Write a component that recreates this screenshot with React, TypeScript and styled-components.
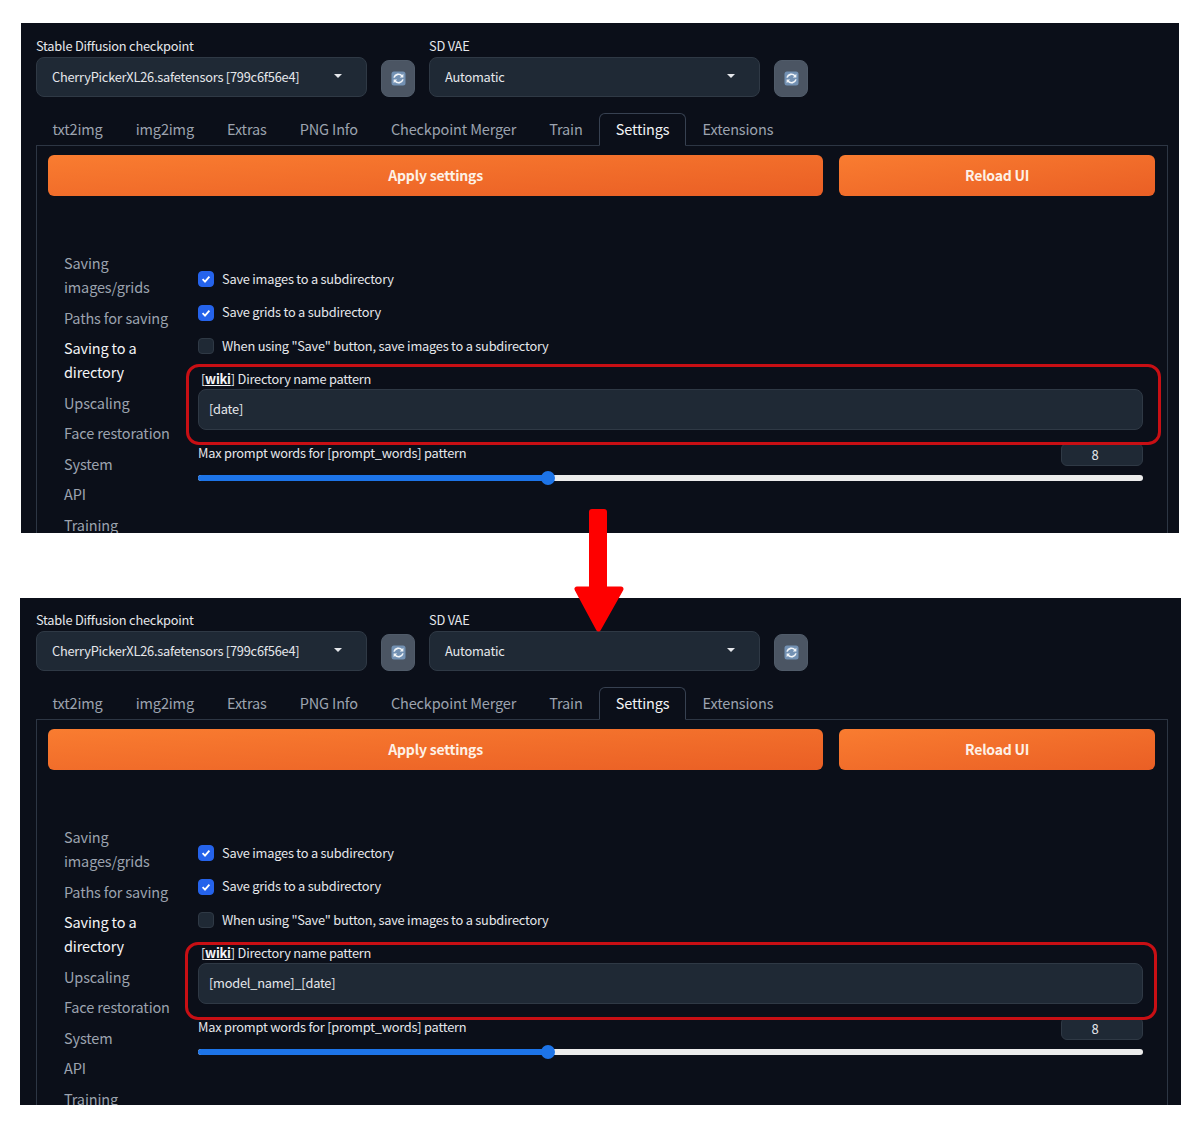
import styled, { createGlobalStyle } from 'styled-components';

const GlobalStyle = createGlobalStyle`
    html, body {
        margin: 0;
        padding: 0;
        background: #ffffff;
    }
    * {
        box-sizing: border-box;
    }
`;

const Page = styled.div`
    position: relative;
    height: 1128px;
    padding-top: 23px;
    display: flex;
    flex-flow: column;
    gap: 65px;
    font-family: "Noto Sans CJK JP", "Noto Sans", sans-serif;
    color: #e5e7eb;
    overflow: hidden;
`;

const Panel = styled.div<{ $left: number; $width: number; $height: number; $top: number }>`
    margin-left: ${(p) => p.$left}px;
    width: ${(p) => p.$width}px;
    height: ${(p) => p.$height}px;
    padding: ${(p) => p.$top}px 0 0 ${(p) => 36 - p.$left}px;
    background-color: #0b0f19;
    overflow: hidden;
    flex: none;
`;

const TopRow = styled.div`
    display: flex;
    align-items: flex-end;
    height: 51px;
`;

const ModelField = styled.div<{ $gap: number }>`
    display: flex;
    align-items: flex-end;
    margin-right: ${(p) => p.$gap}px;
`;

const ModelSelectWrap = styled.div`
    display: flex;
    flex-flow: column;
    margin-right: 14px;
`;

const SmallLabel = styled.label`
    font-size: 12.8px;
    letter-spacing: -0.22px;
    line-height: 16px;
    height: 19px;
    color: #e5e7eb;
    white-space: nowrap;
`;

const Select = styled.div<{ $width: number }>`
    display: flex;
    align-items: center;
    justify-content: space-between;
    width: ${(p) => p.$width}px;
    height: 40px;
    padding: 0 24px 2px 15px;
    background-color: #1f2935;
    border: 1px solid #2f3945;
    border-radius: 8px;
    font-size: 12.8px;
    letter-spacing: -0.22px;
    color: #e5e7eb;
    white-space: nowrap;
`;

const Caret = styled.span`
    width: 0;
    height: 0;
    border-left: 4px solid transparent;
    border-right: 4px solid transparent;
    border-top: 4px solid #e5e7eb;
`;

const RefreshButton = styled.div`
    display: flex;
    align-items: center;
    justify-content: center;
    width: 34px;
    height: 37px;
    background-color: #4b5563;
    border: 1px solid #505b69;
    border-radius: 8px;
`;

const Tabs = styled.div`
    display: flex;
    height: 33px;
    margin-top: 16px;
    position: relative;
    z-index: 1;
`;

const Tab = styled.div<{ $active?: boolean }>`
    display: flex;
    align-items: center;
    height: 33px;
    padding: 0 15.55px 2px;
    font-size: 14.5px;
    letter-spacing: -0.15px;
    white-space: nowrap;
    color: ${(p) => (p.$active ? '#f3f4f6' : '#9ca3af')};
    background-color: ${(p) => (p.$active ? '#0b0f19' : 'transparent')};
    border: 1px solid ${(p) => (p.$active ? '#374151' : 'transparent')};
    border-bottom: ${(p) => (p.$active ? '1px solid #0b0f19' : '1px solid transparent')};
    border-radius: 6px 6px 0 0;
`;

const TabBody = styled.div`
    width: 1132px;
    height: 600px;
    margin-top: -1px;
    padding: 9px 12px 0 11px;
    border: 1px solid #2d3644;
`;

const ActionRow = styled.div`
    display: flex;
    gap: 16px;
`;

const ActionButton = styled.div<{ $width: number }>`
    display: flex;
    align-items: center;
    justify-content: center;
    width: ${(p) => p.$width}px;
    height: 41px;
    padding-bottom: 2px;
    background: linear-gradient(to bottom right, #f97c30, #ea5f25);
    border-radius: 6px;
    font-size: 14px;
    letter-spacing: -0.2px;
    font-weight: 700;
    color: #fdf1e7;
`;

const SettingsLayout = styled.div`
    display: flex;
    margin-top: 55px;
`;

const Sidebar = styled.div`
    display: flex;
    flex-flow: column;
    gap: 6.55px;
    width: 150px;
    padding-left: 16px;
    flex: none;
`;

const SideItem = styled.div<{ $active?: boolean }>`
    font-size: 14.5px;
    letter-spacing: -0.15px;
    line-height: 24px;
    color: ${(p) => (p.$active ? '#f3f4f6' : '#9ca3af')};
    white-space: pre;
`;

const SettingsColumn = styled.div`
    display: flex;
    flex-flow: column;
    width: 945px;
    padding-top: 20px;
`;

const CheckRow = styled.div`
    display: flex;
    align-items: center;
    gap: 8px;
    height: 16px;
    margin-bottom: 17.7px;
    font-size: 12.8px;
    letter-spacing: -0.22px;
    white-space: nowrap;
`;

const CheckText = styled.span`
    margin-top: -2px;
`;

const CheckBox = styled.span<{ $checked?: boolean }>`
    display: flex;
    align-items: center;
    justify-content: center;
    width: 16px;
    height: 16px;
    border-radius: 4px;
    background-color: ${(p) => (p.$checked ? '#2563eb' : '#1f2935')};
    border: 1px solid ${(p) => (p.$checked ? '#2563eb' : '#2f3945')};
`;

const PatternField = styled.div`
    position: relative;
    margin-top: -1px;
`;

const PatternLabel = styled.div`
    padding: 1px 0 0 3px;
    font-size: 12.8px;
    letter-spacing: -0.22px;
    line-height: 14px;
    height: 18px;
    white-space: nowrap;
`;

const WikiLink = styled.span`
    font-weight: 700;
    text-decoration: underline;
    color: #f3f4f6;
`;

const PatternInput = styled.div`
    display: flex;
    align-items: center;
    height: 41px;
    padding: 0 0 2px 10px;
    background-color: #1f2935;
    border: 1px solid #2f3945;
    border-radius: 8px;
    font-size: 12.8px;
    letter-spacing: -0.22px;
`;

const RedFrame = styled.div<{ $top: number; $right: number; $left: number; $height: number }>`
    position: absolute;
    top: ${(p) => p.$top}px;
    left: ${(p) => p.$left}px;
    right: ${(p) => p.$right}px;
    height: ${(p) => p.$height}px;
    border: 3px solid #c80f14;
    border-radius: 13px;
    pointer-events: none;
`;

const SliderHead = styled.div`
    display: flex;
    justify-content: space-between;
    align-items: flex-start;
    height: 31px;
    margin-top: 14px;
    padding-top: 1px;
    font-size: 12.8px;
    letter-spacing: -0.22px;
    line-height: 16px;
    white-space: nowrap;
`;

const NumberBox = styled.div`
    display: flex;
    align-items: center;
    justify-content: center;
    width: 82px;
    height: 23px;
    margin-top: -2px;
    padding-right: 14px;
    background-color: #1f2935;
    border: 1px solid #2f3945;
    border-radius: 6px;
    font-size: 13px;
`;

const SliderTrack = styled.div`
    position: relative;
    height: 6px;
    border-radius: 3px;
    background-color: #ececec;
`;

const SliderFill = styled.div`
    height: 6px;
    border-radius: 3px;
    background-color: #1d74e8;
`;

const SliderThumb = styled.div`
    position: absolute;
    top: -4px;
    width: 14px;
    height: 14px;
    margin-left: -7px;
    border-radius: 50%;
    background-color: #1d74e8;
`;

const ArrowOverlay = styled.svg`
    position: absolute;
    left: 570px;
    top: 505px;
`;

const RefreshIcon = () => (
    <svg width="15" height="15" viewBox="0 0 15 15">
        <rect x="0.5" y="0.5" width="14" height="14" rx="2.5" fill="#7391b3" />
        <path d="M3 6.6 A4.6 4.6 0 0 1 11 5" fill="none" stroke="#f2f5f8" strokeWidth="1.6" />
        <path d="M12 8.4 A4.6 4.6 0 0 1 4 10" fill="none" stroke="#f2f5f8" strokeWidth="1.6" />
        <path d="M12.4 2.8 V6.6 H8.8 Z" fill="#f2f5f8" />
        <path d="M2.6 12.2 V8.4 H6.2 Z" fill="#f2f5f8" />
    </svg>
);

const CheckMark = () => (
    <svg width="10" height="10" viewBox="0 0 10 10">
        <path d="M1.6 5.2 L4 7.6 L8.4 2.6" fill="none" stroke="#ffffff" strokeWidth="1.8" />
    </svg>
);

const tabNames = ['txt2img', 'img2img', 'Extras', 'PNG Info', 'Checkpoint Merger', 'Train', 'Settings', 'Extensions'];

const sideItems = [
    'Saving\nimages/grids',
    'Paths for saving',
    'Saving to a\ndirectory',
    'Upscaling',
    'Face restoration',
    'System',
    'API',
    'Training',
];

const checks = [
    { text: 'Save images to a subdirectory', checked: true },
    { text: 'Save grids to a subdirectory', checked: true },
    { text: 'When using "Save" button, save images to a subdirectory', checked: false },
];

type SettingsPanelProps = {
    left: number;
    width: number;
    height: number;
    top: number;
    pattern: string;
    frame: { top: number; left: number; right: number; height: number };
};

const SettingsPanel = ({ left, width, height, top, pattern, frame }: SettingsPanelProps) => (
    <Panel $left={left} $width={width} $height={height} $top={top}>
        <TopRow>
            <ModelField $gap={14}>
                <ModelSelectWrap>
                    <SmallLabel>Stable Diffusion checkpoint</SmallLabel>
                    <Select $width={331}>
                        CherryPickerXL26.safetensors [799c6f56e4]
                        <Caret />
                    </Select>
                </ModelSelectWrap>
                <RefreshButton><RefreshIcon /></RefreshButton>
            </ModelField>
            <ModelField $gap={0}>
                <ModelSelectWrap>
                    <SmallLabel>SD VAE</SmallLabel>
                    <Select $width={331}>
                        Automatic
                        <Caret />
                    </Select>
                </ModelSelectWrap>
                <RefreshButton><RefreshIcon /></RefreshButton>
            </ModelField>
        </TopRow>
        <Tabs>
            {tabNames.map((name) => (
                <Tab key={name} $active={name === 'Settings'}>{name}</Tab>
            ))}
        </Tabs>
        <TabBody>
            <ActionRow>
                <ActionButton $width={776}>Apply settings</ActionButton>
                <ActionButton $width={316}>Reload UI</ActionButton>
            </ActionRow>
            <SettingsLayout>
                <Sidebar>
                    {sideItems.map((item) => (
                        <SideItem key={item} $active={item === 'Saving to a\ndirectory'}>{item}</SideItem>
                    ))}
                </Sidebar>
                <SettingsColumn>
                    {checks.map((check) => (
                        <CheckRow key={check.text}>
                            <CheckBox $checked={check.checked}>{check.checked && <CheckMark />}</CheckBox>
                            <CheckText>{check.text}</CheckText>
                        </CheckRow>
                    ))}
                    <PatternField>
                        <PatternLabel>[<WikiLink>wiki</WikiLink>] Directory name pattern</PatternLabel>
                        <PatternInput>{pattern}</PatternInput>
                        <RedFrame $top={frame.top} $left={frame.left} $right={frame.right} $height={frame.height} />
                    </PatternField>
                    <SliderHead>
                        Max prompt words for [prompt_words] pattern
                        <NumberBox>8</NumberBox>
                    </SliderHead>
                    <SliderTrack>
                        <SliderFill style={{ width: `${(350 / 945) * 100}%` }} />
                        <SliderThumb style={{ left: `${(350 / 945) * 100}%` }} />
                    </SliderTrack>
                </SettingsColumn>
            </SettingsLayout>
        </TabBody>
    </Panel>
);

const App = () => (
    <Page>
        <GlobalStyle />
        <SettingsPanel
            left={21}
            width={1158}
            height={510}
            top={23}
            pattern="[date]"
            frame={{ top: -7, left: -12, right: -18, height: 81 }}
        />
        <SettingsPanel
            left={20}
            width={1161}
            height={507}
            top={22}
            pattern="[model_name]_[date]"
            frame={{ top: -3, left: -13, right: -14, height: 78 }}
        />
        <ArrowOverlay width="60" height="130" viewBox="0 0 60 130">
            <rect x="19" y="4" width="18" height="90" rx="3" fill="#fe0000" />
            <path d="M7 84 H51 L28.5 124 Z" fill="#fe0000" stroke="#fe0000" strokeWidth="5" strokeLinejoin="round" />
        </ArrowOverlay>
    </Page>
);

export default App;
